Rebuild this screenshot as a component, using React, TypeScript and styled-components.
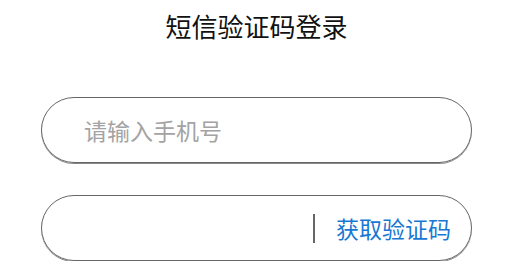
import styled, { createGlobalStyle } from "styled-components";

const GlobalStyle = createGlobalStyle`
  html, body {
    margin: 0;
    padding: 0;
    background: #fff;
    font-family: "Noto Sans CJK SC", "Noto Sans", sans-serif;
  }
`;

const Page = styled.div`
  width: 431px;
  margin-left: 41px;
  padding-top: 7px;
  display: flex;
  flex-direction: column;
`;

const Title = styled.h2`
  margin: 0 0 52px;
  font-size: 26px;
  font-weight: 400;
  line-height: 38px;
  color: #111;
  text-align: center;
`;

const Form = styled.form`
  display: flex;
  flex-direction: column;
  gap: 32px;
`;

const Field = styled.div`
  height: 64px;
  border: 1px solid #666;
  border-radius: 33px;
  box-shadow: 0 1px 0 #888;
  display: flex;
  align-items: center;
  padding: 0 20px 0 40px;
`;

const Input = styled.input`
  flex: 1;
  min-width: 0;
  border: none;
  outline: none;
  background: transparent;
  font-family: inherit;
  font-size: 23px;
  color: #333;

  &::placeholder {
    color: #a3a3a3;
  }
`;

const Divider = styled.span`
  width: 2px;
  height: 29px;
  background: #666;
  margin-right: 21px;
`;

const CodeButton = styled.button`
  border: none;
  background: none;
  padding: 0;
  font-family: inherit;
  font-size: 23px;
  color: #1778d3;
  cursor: pointer;
`;

export default function App() {
  return (
    <>
      <GlobalStyle />
      <Page>
        <Title>短信验证码登录</Title>
        <Form onSubmit={(e) => e.preventDefault()}>
          <Field>
            <Input placeholder="请输入手机号" />
          </Field>
          <Field>
            <Input />
            <Divider />
            <CodeButton type="button">获取验证码</CodeButton>
          </Field>
        </Form>
      </Page>
    </>
  );
}
